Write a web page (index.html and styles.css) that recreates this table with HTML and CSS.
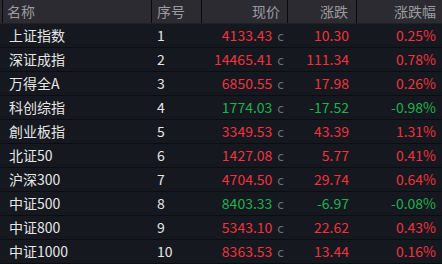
FILE: index.html
```html
<!DOCTYPE html>
<html>
<head>
<meta charset="utf-8">
<link rel="stylesheet" href="styles.css">
</head>
<body>
<div class="tbl">
  <div class="row head">
    <div class="c name">名称</div>
    <div class="c seq">序号</div>
    <div class="c price">现价</div>
    <div class="c chg">涨跌</div>
    <div class="c pct">涨跌幅</div>
  </div>
  <div class="row"><div class="c name">上证指数</div><div class="c seq">1</div><div class="c price up">4133.43<span class="u">c</span></div><div class="c chg up">10.30</div><div class="c pct up">0.25%</div></div>
  <div class="row"><div class="c name">深证成指</div><div class="c seq">2</div><div class="c price up">14465.41<span class="u">c</span></div><div class="c chg up">111.34</div><div class="c pct up">0.78%</div></div>
  <div class="row"><div class="c name">万得全A</div><div class="c seq">3</div><div class="c price up">6850.55<span class="u">c</span></div><div class="c chg up">17.98</div><div class="c pct up">0.26%</div></div>
  <div class="row"><div class="c name">科创综指</div><div class="c seq">4</div><div class="c price dn">1774.03<span class="u">c</span></div><div class="c chg dn">-17.52</div><div class="c pct dn">-0.98%</div></div>
  <div class="row"><div class="c name">創业板指</div><div class="c seq">5</div><div class="c price up">3349.53<span class="u">c</span></div><div class="c chg up">43.39</div><div class="c pct up">1.31%</div></div>
  <div class="row"><div class="c name">北证50</div><div class="c seq">6</div><div class="c price up">1427.08<span class="u">c</span></div><div class="c chg up">5.77</div><div class="c pct up">0.41%</div></div>
  <div class="row"><div class="c name">沪深300</div><div class="c seq">7</div><div class="c price up">4704.50<span class="u">c</span></div><div class="c chg up">29.74</div><div class="c pct up">0.64%</div></div>
  <div class="row"><div class="c name">中证500</div><div class="c seq">8</div><div class="c price dn">8403.33<span class="u">c</span></div><div class="c chg dn">-6.97</div><div class="c pct dn">-0.08%</div></div>
  <div class="row"><div class="c name">中证800</div><div class="c seq">9</div><div class="c price up">5343.10<span class="u">c</span></div><div class="c chg up">22.62</div><div class="c pct up">0.43%</div></div>
  <div class="row"><div class="c name">中证1000</div><div class="c seq">10</div><div class="c price up">8363.53<span class="u">c</span></div><div class="c chg up">13.44</div><div class="c pct up">0.16%</div></div>
</div>
</body>
</html>
```
FILE: styles.css
```css
html, body {
  margin: 0;
  padding: 0;
  background: #15181e;
}
body {
  width: 442px;
  height: 264px;
  overflow: hidden;
  font-family: "Noto Sans CJK SC", "Noto Sans", sans-serif;
}
.tbl {
  display: flex;
  flex-direction: column;
}
.row {
  display: grid;
  grid-template-columns: 152px 50px 86px 69px 85px;
  height: 24px;
  box-sizing: border-box;
  border-bottom: 1px solid #0c0d10;
  background: #15181e;
  color: #e6e6e6;
  font-size: 14px;
  line-height: 23px;
}
.row.head {
  background: #2c2b31;
  color: #9b9ba0;
  font-size: 14px;
  border-bottom: 1px solid #202126;
}
.head .c {
  border-right: 1px solid #0a0a0c;
}
.head .c:last-child {
  border-right: none;
}
.head .name {
  border-left: 1px solid #0a0a0c;
  margin-left: 2px;
  padding-left: 4px;
}
.c {
  white-space: nowrap;
  overflow: hidden;
}
.name {
  padding-left: 9px;
}
.seq {
  padding-left: 5px;
}
.price {
  text-align: right;
  padding-right: 4px;
}
.head .price { padding-right: 7px; }
.chg {
  text-align: right;
  padding-right: 8px;
}
.pct {
  text-align: right;
  padding-right: 6px;
}
.u {
  color: #6c6d72;
  font-size: 13px;
  margin-left: 5px;
}
.up { color: #f0333f; }
.dn { color: #1fb14f; }
```
